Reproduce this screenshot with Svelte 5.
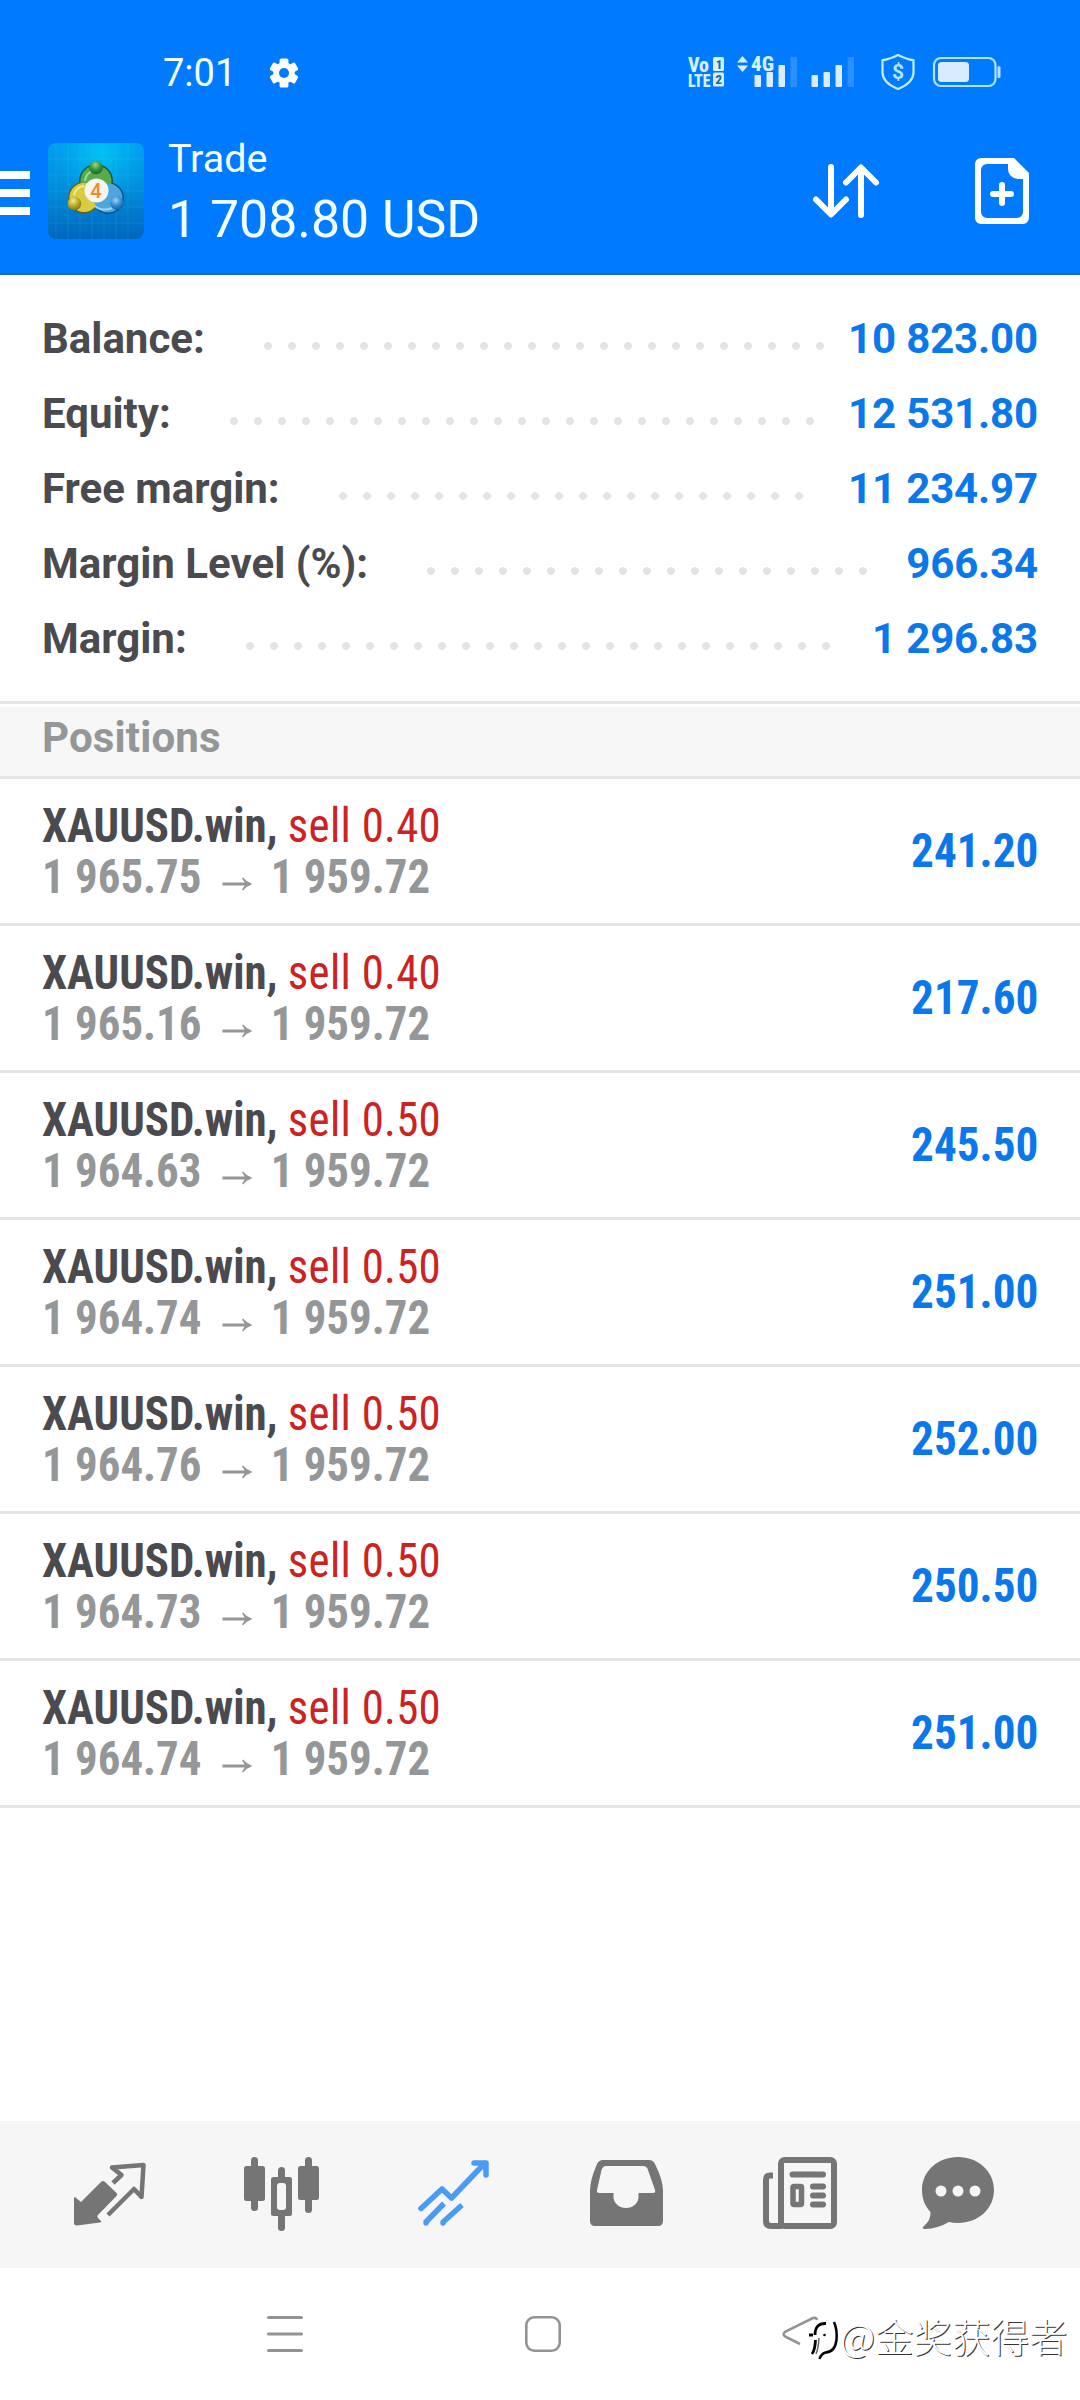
<script lang="ts">
	type Row = { label: string; value: string; dots: number };

	const summary: Row[] = [
		{ label: 'Balance:', value: '10 823.00', dots: 24 },
		{ label: 'Equity:', value: '12 531.80', dots: 25 },
		{ label: 'Free margin:', value: '11 234.97', dots: 20 },
		{ label: 'Margin Level (%):', value: '966.34', dots: 19 },
		{ label: 'Margin:', value: '1 296.83', dots: 25 }
	];

	const positions = [
		{ volume: '0.40', open: '1 965.75', profit: '241.20' },
		{ volume: '0.40', open: '1 965.16', profit: '217.60' },
		{ volume: '0.50', open: '1 964.63', profit: '245.50' },
		{ volume: '0.50', open: '1 964.74', profit: '251.00' },
		{ volume: '0.50', open: '1 964.76', profit: '252.00' },
		{ volume: '0.50', open: '1 964.73', profit: '250.50' },
		{ volume: '0.50', open: '1 964.74', profit: '251.00' }
	];
	const symbol = 'XAUUSD.win';
	const current = '1 959.72';
</script>

<div class="screen">
	<div class="head">
		<div class="status">
			<span class="time">7:01</span>
			<svg class="gear" width="30" height="30" viewBox="0 0 30 30">
				<g fill="#fff">
					{#each [0, 60, 120] as a (a)}
						<rect x="10.6" y="0.5" width="8.8" height="29" rx="1.6" transform="rotate({a} 15 15)" />
					{/each}
					<circle cx="15" cy="15" r="10.7" />
				</g>
				<circle cx="15" cy="15" r="5" fill="#007aff" />
			</svg>
			<svg class="indicators" width="316" height="40" viewBox="0 0 316 40">
				<g class="cell" fill="#d4f1ff">
					<text x="0" y="17.5" font-size="19.5" textLength="21" lengthAdjust="spacingAndGlyphs">Vo</text>
					<text x="0" y="32.7" font-size="18.5" textLength="22.5" lengthAdjust="spacingAndGlyphs">LTE</text>
					<rect x="25" y="3" width="11" height="14" rx="1.5" />
					<rect x="25" y="18.5" width="11" height="14" rx="1.5" />
					<text x="27.8" y="14.8" font-size="13" fill="#1668b8">1</text>
					<text x="27.3" y="30.3" font-size="13.5" fill="#1668b8">2</text>
					<path d="M49 8.5l5.5-6.5 5.5 6.5zM49 11.5l5.5 6.5 5.5-6.5z" />
					<text x="63" y="16.5" font-size="21" textLength="23" lengthAdjust="spacingAndGlyphs">4G</text>
				</g>
				<g fill="#d8edff">
					<rect x="66.5" y="21" width="6.5" height="12" rx="1" />
					<rect x="78.5" y="18" width="6.5" height="15" rx="1" />
					<rect x="90.5" y="11" width="6.5" height="22" rx="1" />
					<rect x="102.5" y="3" width="6.5" height="30" rx="1" opacity=".2" />
					<rect x="123.5" y="21" width="6.5" height="12" rx="1" />
					<rect x="135.5" y="18" width="6.5" height="15" rx="1" />
					<rect x="147.5" y="11" width="6.5" height="22" rx="1" />
					<rect x="159.5" y="3" width="6.5" height="30" rx="1" opacity=".2" />
				</g>
				<path
					d="M210 1Q201 5.5 194.5 6.2V19Q195 29 210 35Q225 29 225.5 19V6.2Q219 5.5 210 1z"
					fill="none"
					stroke="#c4eeff"
					stroke-width="2.2"
					stroke-linejoin="round"
				/>
				<text x="210" y="25" text-anchor="middle" font-weight="700" font-size="21" fill="#b4e2ff">$</text>
				<rect x="246" y="4" width="61.5" height="28" rx="7" fill="none" stroke="#b4e2ff" stroke-width="2.2" />
				<rect x="250" y="8" width="31" height="20" rx="3.5" fill="#d8ebff" />
				<rect x="309.5" y="12" width="3" height="12" rx="1.5" fill="#b4e2ff" />
			</svg>
		</div>

		<header class="appbar">
			<div class="burger"><i></i><i></i><i></i></div>
			<svg width="96" height="96" viewBox="0 0 96 96">
				<defs>
					<linearGradient id="bg" x1="0" y1="0" x2="0" y2="1">
						<stop offset="0" stop-color="#00a0ef" />
						<stop offset="0.45" stop-color="#0090dc" />
						<stop offset="1" stop-color="#0066bd" />
					</linearGradient>
					<radialGradient id="shine" cx="0.55" cy="0.1" r="0.5">
						<stop offset="0" stop-color="#00c4f4" />
						<stop offset="1" stop-color="#00b0f0" stop-opacity="0" />
					</radialGradient>
					<radialGradient id="green" cx="0.45" cy="0.3" r="0.7">
						<stop offset="0" stop-color="#9fd592" />
						<stop offset="0.5" stop-color="#3c9a3c" />
						<stop offset="1" stop-color="#14662a" />
					</radialGradient>
					<radialGradient id="gold" cx="0.4" cy="0.3" r="0.7">
						<stop offset="0" stop-color="#f3ec8a" />
						<stop offset="0.5" stop-color="#c3b12c" />
						<stop offset="1" stop-color="#7f7818" />
					</radialGradient>
					<radialGradient id="blue" cx="0.4" cy="0.3" r="0.7">
						<stop offset="0" stop-color="#9ad6f5" />
						<stop offset="0.5" stop-color="#3a95d4" />
						<stop offset="1" stop-color="#125f9f" />
					</radialGradient>
				</defs>
				<rect width="96" height="96" rx="8" fill="url(#bg)" />
				<rect width="96" height="96" rx="8" fill="url(#shine)" />
				<path
					d="M8 0V96M20 0V96M32 0V96M44 0V96M56 0V96M68 0V96M80 0V96M0 16H96M0 32H96M0 48H96M0 64H96M0 80H96"
					stroke="#5cc8ff"
					stroke-opacity=".15"
				/>
				<!-- filled body discs keep the rings solid like figures seen from above -->
				<circle cx="48" cy="38" r="17" fill="#1d5c38" />
				<circle cx="36" cy="54.5" r="16" fill="#5c6428" />
				<circle cx="60" cy="55" r="16" fill="#134f85" />
				<circle cx="48" cy="38" r="15.5" fill="#57ab4b" />
				<circle cx="36" cy="54.5" r="14.5" fill="#d9cc42" />
				<circle cx="60" cy="55" r="14.5" fill="#4ea6de" />
				<path d="M37 38Q38 28 48 28" fill="none" stroke="#9fd592" stroke-width="2" />
				<path d="M26 52Q28 44 36 43" fill="none" stroke="#f3ec8a" stroke-width="2" />
				<path d="M47 63Q54 69 64 65" fill="none" stroke="#9ad6f5" stroke-width="2" />
				<circle cx="48" cy="24.5" r="6.8" fill="url(#green)" />
				<circle cx="26.5" cy="60.5" r="6.8" fill="url(#gold)" />
				<circle cx="69" cy="60" r="6.8" fill="url(#blue)" />
				<circle cx="48.5" cy="47.5" r="12" fill="#f8f4f2" />
				<text x="48" y="55" text-anchor="middle" font-size="20" font-weight="500" fill="#f08a24">4</text>
			</svg>
			<div class="titles">
				<span class="title">Trade</span>
				<span class="total">1 708.80 USD</span>
			</div>
			<svg class="sort" width="66" height="54" viewBox="0 0 66 54">
				<g fill="none" stroke="#fff" stroke-width="6" stroke-linecap="round" stroke-linejoin="round">
					<path d="M18 3V50M3 35.5L18 50.5L33 35.5" />
					<path d="M48 51V4M33 18.5L48 3.5L63 18.5" />
				</g>
			</svg>
			<svg width="54" height="66" viewBox="0 0 54 66">
				<path
					fill="#fff"
					fill-rule="evenodd"
					d="M6 0H39L54 15V60a6 6 0 0 1-6 6H6a6 6 0 0 1-6-6V6a6 6 0 0 1 6-6zM12 6a6 6 0 0 0-6 6V54a6 6 0 0 0 6 6H42a6 6 0 0 0 6-6V21H43a10 10 0 0 1-10-10V6z"
				/>
				<path d="M27 27V45M18 36H36" stroke="#fff" stroke-width="6" stroke-linecap="round" />
			</svg>
		</header>
	</div>

	<section class="summary">
		{#each summary as row (row.label)}
			<div class="line">
				<span class="label">{row.label}</span>
				<span class="dots" style="width: {row.dots * 24}px"></span>
				<span class="amount">{row.value}</span>
			</div>
		{/each}
	</section>

	<h2>Positions</h2>

	<ul>
		{#each positions as p, i (i)}
			<li>
				<div class="info">
					<div class="name"><b>{symbol},</b> <span class="sell">sell {p.volume}</span></div>
					<div class="prices">
						<span>{p.open}</span>
						<svg width="32" height="14" viewBox="0 0 32 14">
							<path d="M0 7H29" stroke="#949698" stroke-width="3" />
							<path d="M22 0.5Q26 5 32 7Q26 9 22 13.5L21 12.5Q24 9 24 7Q24 5 21 1.5z" fill="#949698" />
						</svg>
						<span>{current}</span>
					</div>
				</div>
				<span class="profit">{p.profit}</span>
			</li>
		{/each}
	</ul>

	<nav class="tabs">
		<svg width="180" height="147" viewBox="0 0 180 147">
			<path
				d="M74 77q.5-2 2 0L81 81L101 61q2-2 4 0L116.5 72q1.5 1.5 0 3L97.5 94.5L97.5 96.5L101.5 100.5L100 101.5L77 104.5Q74 104.5 74 102z"
				fill="#757575"
			/>
			<path
				d="M113 62L121.5 54L112 46.5L143.5 44L141.5 76L134 68L108 94"
				fill="none"
				stroke="#757575"
				stroke-width="4.5"
				stroke-linejoin="round"
			/>
		</svg>
		<svg width="180" height="147" viewBox="0 0 180 147" fill="#757575">
			<rect x="64" y="45" width="21" height="35" rx="2.5" />
			<rect x="71" y="36" width="7" height="54" rx="3.5" />
			<rect x="118" y="45" width="21" height="34" rx="2.5" />
			<rect x="125" y="36" width="7" height="56" rx="3.5" />
			<rect x="98" y="46" width="7" height="20" rx="3.5" />
			<rect x="98" y="86" width="7" height="24" rx="3.5" />
			<rect x="91" y="56" width="21" height="39" rx="2.5" />
			<rect x="97" y="62" width="9" height="27" rx="3" fill="#f6f6f6" />
		</svg>
		<svg width="180" height="147" viewBox="0 0 180 147">
			<g fill="none" stroke="#4a9bf5" stroke-width="5.5" stroke-linejoin="round">
				<path stroke-linecap="round" d="M61 87.5L82 68L91.5 77L125 42M114 42H126V54" />
				<path d="M65 102L84 82.5M82 102L102 84" />
			</g>
			<g fill="#4a9bf5">
				<circle cx="66" cy="102" r="2.7" />
				<circle cx="83" cy="102" r="2.7" />
				<path d="M116 41H127V52z" />
			</g>
		</svg>
		<svg width="180" height="147" viewBox="0 0 180 147">
			<path
				fill="#757575"
				fill-rule="evenodd"
				d="M63 39H109q4 0 6 4Q123 59 123 70V100q0 5-5 5H55q-5 0-5-5V70Q50 59 57 43q2-4 6-4zM66 45q-3 0-4.5 4L57 69q-.5 3 2 3H73.5V76a12.5 11 0 0 0 25 0V72H113q3 0 2-3L108 49q-1-4-5-4z"
			/>
		</svg>
		<svg width="180" height="147" viewBox="0 0 180 147">
			<g fill="none" stroke="#757575" stroke-width="6">
				<rect x="61" y="39" width="53" height="66" rx="3.5" />
				<path d="M53 54.5H50q-4 0-4 4V100q0 5 5 5H62" />
				<path d="M72.5 53.5H103M93 65.5H103M93 74.5H103M93 83.5H103" stroke-linecap="round" />
				<rect x="73" y="65.5" width="8.5" height="18" rx="1" stroke-width="5.5" />
			</g>
		</svg>
		<svg width="180" height="147" viewBox="0 0 180 147">
			<path
				fill="#757575"
				d="M58 36C78 36 94 50 94 69S78 102 58 102Q53 102 49 101Q38 107.5 25 108Q21 108 24 105Q31 99 30.5 91C25 85 22 78 22 69C22 50 38 36 58 36z"
			/>
			<g fill="#f6f6f6">
				<circle cx="41" cy="70" r="5.5" />
				<circle cx="58" cy="70" r="5.5" />
				<circle cx="75" cy="70" r="5.5" />
			</g>
		</svg>
	</nav>

	<div class="sysnav">
		<svg width="36" height="36" viewBox="0 0 36 36">
			<path d="M1.5 1.5H34.5M1.5 18H34.5M1.5 34.5H34.5" stroke="#939393" stroke-width="3" stroke-linecap="round" />
		</svg>
		<svg width="36" height="36" viewBox="0 0 36 36">
			<rect x="1.3" y="1.3" width="33.4" height="33.4" rx="8" fill="none" stroke="#939393" stroke-width="2.6" />
		</svg>
		<svg width="36" height="36" viewBox="0 0 36 36">
			<path d="M34 4Q33 1 30 2L2.5 15.5Q-1 18 2 20.5L17 28" fill="none" stroke="#939393" stroke-width="2.6" />
		</svg>
	</div>

	<div class="watermark">
		<svg width="34" height="42" viewBox="0 0 34 42">
			<g fill="none" stroke="#000">
				<path d="M6 36Q9 32 9.500 22M3 17H7M9 17Q9 5 20 5.500" stroke-width="2.8" />
				<path d="M10 36Q12.500 30 13 20" stroke-width="1.5" stroke="#666" />
				<path d="M28 4Q31.500 12 30.500 22Q29 34 19.500 34.500Q15 36 13.500 41" stroke-width="2.5" />
			</g>
			<circle cx="18.5" cy="17" r="1.3" />
		</svg>
		<span>@金奖获得者</span>
	</div>
</div>

<style>
	:global(body) {
		margin: 0;
		background: #fff;
	}
	.screen {
		position: relative;
		display: flex;
		flex-direction: column;
		width: 1080px;
		height: 2400px;
		overflow: hidden;
		background: #fff;
		color: #4a4a4f;
		font-family: Roboto, sans-serif;
	}
	svg {
		display: block;
		flex: none;
		overflow: visible;
	}
	.head {
		box-sizing: border-box;
		height: 275px;
		background: #007aff;
		border-bottom: 2px solid #1c69b8;
		color: #f2ffff;
	}
	.status {
		box-sizing: border-box;
		height: 143px;
		padding: 50px 76px 0 163px;
		display: flex;
		align-items: flex-start;
	}
	.time {
		font-size: 38px;
		font-weight: 450;
		line-height: 46px;
		width: 106px;
	}
	.gear {
		margin-top: 8px;
	}
	.indicators {
		margin: 4px 0 0 auto;
	}
	.cell {
		font-weight: 800;
		font-stretch: condensed;
	}
	.appbar {
		display: flex;
		align-items: flex-start;
	}
	.burger {
		display: flex;
		flex-direction: column;
		gap: 10px;
		width: 48px;
		padding-top: 28px;
	}
	.burger i {
		width: 30px;
		height: 8px;
		background: #fff;
	}
	.titles {
		display: flex;
		flex-direction: column;
		margin-left: 24px;
		width: 645px;
	}
	.title {
		font-size: 39.5px;
		line-height: 46px;
		margin-top: -7px;
	}
	.total {
		font-size: 51.8px;
		line-height: 60px;
		margin-top: 8px;
	}
	.sort {
		margin: 21px 96px 0 0;
	}
	.sort + svg {
		margin-top: 15px;
	}
	.summary {
		box-sizing: border-box;
		height: 429px;
		padding: 25px 42px 0;
		border-bottom: 3px solid #e5e5e5;
		font-weight: 700;
		font-size: 42px;
	}
	.line {
		display: flex;
		align-items: center;
		height: 75px;
	}
	.label,
	.amount {
		padding-top: 2px;
	}
	.dots {
		height: 8px;
		margin: 17px 0 0 51px;
		background: radial-gradient(circle, #e3e3e3 3.5px, transparent 4.3px) 0 0 / 24px 8px;
	}
	.amount {
		margin-left: auto;
		color: #0a78ea;
		letter-spacing: -0.15px;
	}
	h2 {
		box-sizing: border-box;
		height: 72px;
		margin: 3px 0 0;
		padding-left: 42px;
		background: #f7f7f7;
		border-bottom: 3px solid #e5e5e5;
		color: #949698;
		font-size: 42px;
		font-weight: 700;
		line-height: 62px;
		letter-spacing: 0.15px;
	}
	ul {
		list-style: none;
		margin: 0;
		padding: 0;
		flex: 1;
	}
	li {
		box-sizing: border-box;
		display: flex;
		justify-content: space-between;
		height: 147px;
		padding: 21px 42px 0;
		border-bottom: 3px solid #e5e5e5;
		font-stretch: condensed;
		font-size: 48px;
		line-height: 51px;
	}
	/* a touch narrower than the font's own condensed width */
	.info {
		transform: scaleX(0.935);
		transform-origin: left;
	}
	.sell {
		color: #cc2222;
		letter-spacing: 0.3px;
	}
	.prices {
		display: flex;
		color: #949698;
		font-weight: 700;
	}
	.prices svg {
		margin: 26px 20px 0 22px;
	}
	.profit {
		padding-top: 25px;
		color: #0a78ea;
		font-weight: 700;
		transform: scaleX(0.94);
		transform-origin: right;
	}
	.tabs {
		display: flex;
		height: 147px;
		background: #f6f6f6;
	}
	.sysnav {
		box-sizing: border-box;
		display: flex;
		height: 132px;
		padding: 48px 0 0 267px;
		gap: 222px;
	}
	.watermark {
		position: absolute;
		left: 806px;
		top: 2318px;
		display: flex;
		align-items: flex-start;
		color: #fff;
		font-family: 'Noto Sans CJK SC', sans-serif;
		font-size: 38.5px;
		font-weight: 300;
		line-height: 34px;
		text-shadow: 1px 1px 0 #333;
	}
</style>
